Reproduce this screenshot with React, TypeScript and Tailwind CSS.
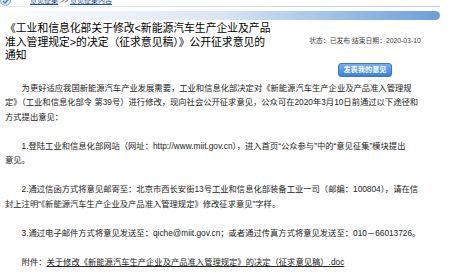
const App = () => {
  return (
    <div
      className="w-[460px] h-[280px] overflow-hidden bg-white text-[#222]"
      style={{ fontFamily: '"Liberation Sans", "Noto Sans CJK SC", sans-serif' }}
    >
      {/* Breadcrumb, scrolled half out of view */}
      <div className="flex items-center h-[10px] -mt-[5px] overflow-visible">
        <svg width="11" height="11" viewBox="0 0 11 11">
          <circle cx="5.5" cy="5.5" r="5" fill="#dbe9f8" stroke="#7fa9d9" strokeWidth="1" />
          <path d="M3 6 L5 8 L8.5 4" fill="none" stroke="#3f7fca" strokeWidth="1.4" />
        </svg>
        <div className="ml-[19px] text-[7px] leading-[9px] whitespace-nowrap text-[#2255a4]">
          <span className="underline">意见征集</span>
          <span className="text-[#555]"> &gt;&gt; </span>
          <span className="underline">意见征集内容</span>
        </div>
      </div>

      {/* Header lines */}
      <div className="mt-[1px] h-px w-[440px] bg-gradient-to-r from-[#e9eef6] to-[#b9cce4]" />
      <div className="mt-[4px] h-[9px] w-[440px] rounded-r-full bg-gradient-to-r from-white via-[#d9e6f5] to-[#6a9fd8]" />

      {/* Title + status */}
      <div className="flex mt-[2px]">
        <h1 className="pl-[5px] w-[300px] text-[10.8px] leading-[13.5px] font-normal text-black whitespace-nowrap">
          《工业和信息化部关于修改&lt;新能源汽车生产企业及产品
          <br />
          准入管理规定&gt;的决定（征求意见稿）》公开征求意见的
          <br />
          通知
        </h1>
        <div className="flex flex-col items-center w-[130px]">
          <div className="mt-[13.5px] text-[6.8px] leading-[9px] text-[#444] whitespace-nowrap">
            状态：已发布 结束日期：2020-03-10
          </div>
          <button className="mt-[18.5px] h-[14px] px-[4px] rounded-[3px] border border-[#3b78c4] bg-gradient-to-b from-[#74aef0] to-[#3d82d6] text-white text-[7.2px] leading-[12px] font-bold whitespace-nowrap">
            发表我的意见
          </button>
        </div>
      </div>

      {/* Body */}
      <div className="mt-[3.5px] px-[5px] text-[8.3px] leading-[14.5px] text-[#222] whitespace-nowrap">
        <p className="mb-[14.5px] indent-[16.6px]">
          为更好适应我国新能源汽车产业发展需要，工业和信息化部决定对《新能源汽车生产企业及产品准入管理规
          <br />
          定》（工业和信息化部令 第39号）进行修改，现向社会公开征求意见，公众可在2020年3月10日前通过以下途径和
          <br />
          方式提出意见：
        </p>
        <p className="mb-[14.5px] indent-[16.6px]">
          1.登陆工业和信息化部网站（网址：http://www.miit.gov.cn），进入首页“公众参与”中的“意见征集”模块提出
          <br />
          意见。
        </p>
        <p className="mb-[14.5px] indent-[16.6px]">
          2.通过信函方式将意见邮寄至：北京市西长安街13号工业和信息化部装备工业一司（邮编：100804），请在信
          <br />
          封上注明“《新能源汽车生产企业及产品准入管理规定》修改征求意见”字样。
        </p>
        <p className="mb-[14.5px] indent-[16.6px]">
          3.通过电子邮件方式将意见发送至：qiche@miit.gov.cn；或者通过传真方式将意见发送至：010－66013726。
        </p>
        <p className="indent-[16.6px]">
          附件：<span className="underline">关于修改《新能源汽车生产企业及产品准入管理规定》的决定（征求意见稿）.doc</span>
        </p>
      </div>
    </div>
  );
};

export default App;
